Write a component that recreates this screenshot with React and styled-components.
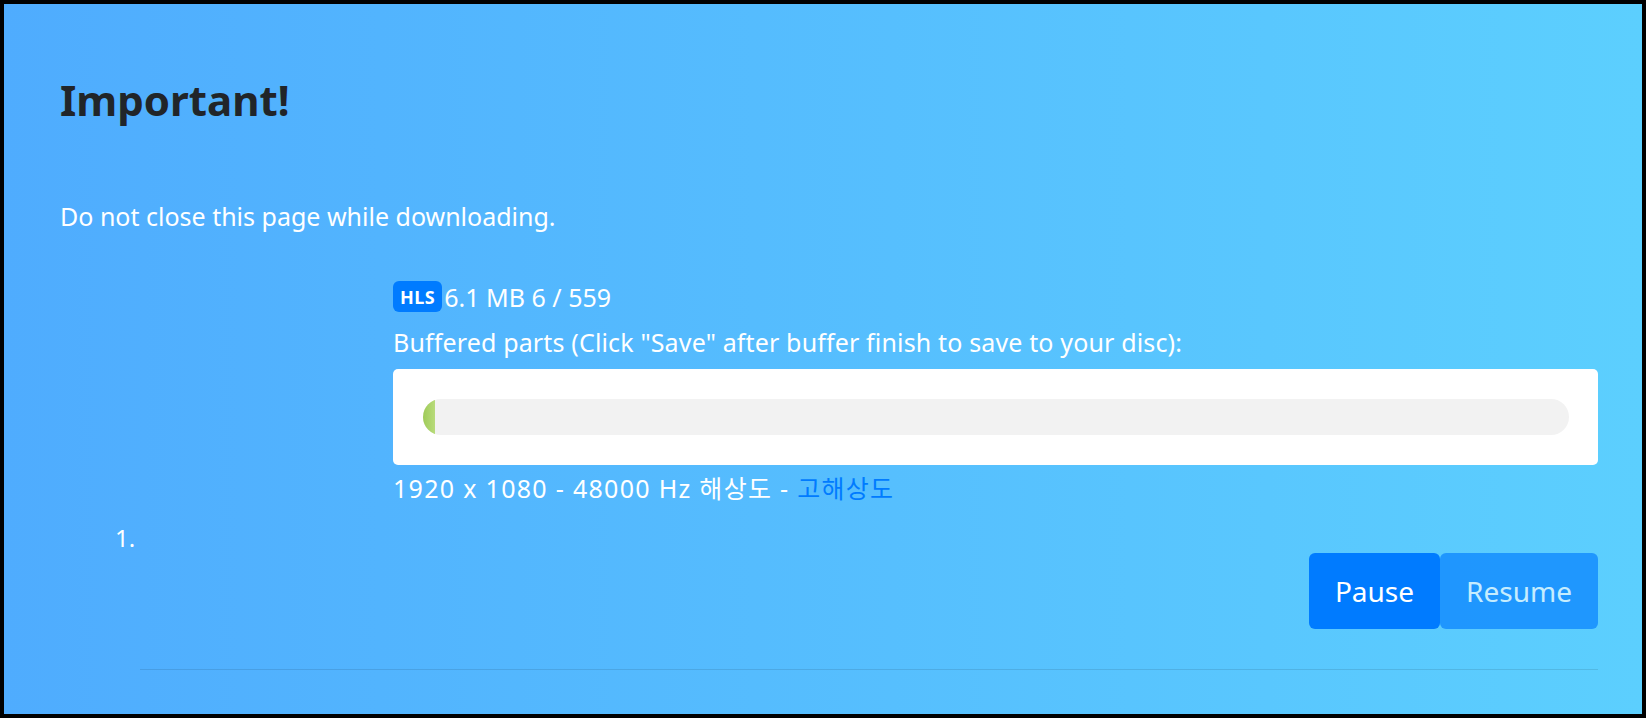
import React from "react";
import styled, { createGlobalStyle } from "styled-components";

const GlobalStyle = createGlobalStyle`
  html, body {
    margin: 0;
    padding: 0;
  }

  body {
    font-family: "Noto Sans", "Noto Sans CJK KR", sans-serif;
    color: #fff;
  }

  * {
    box-sizing: border-box;
  }
`;

const download = {
  index: 1,
  type: "HLS",
  size: "6.1 MB",
  done: 6,
  total: 559,
  resolution: "1920 x 1080 - 48000 Hz 해상도 - ",
  quality: "고해상도",
};

const App = () => {
  const percent = (download.done / download.total) * 100;

  return (
    <>
      <GlobalStyle />
      <Frame>
        <Title>Important!</Title>
        <Notice>Do not close this page while downloading.</Notice>

        <List>
          <Item>
            <Marker>{download.index}.</Marker>
            <Entry>
              <Body>
                <Meta>
                  <Badge>{download.type}</Badge>
                  <span>
                    {download.size} {download.done} / {download.total}
                  </span>
                </Meta>
                <Label>
                  Buffered parts (Click "Save" after buffer finish to save to
                  your disc):
                </Label>
                <Panel>
                  <Track>
                    <Fill style={{ width: `${percent}%` }} />
                  </Track>
                </Panel>
                <Resolution>
                  {download.resolution}
                  <Link href="#">{download.quality}</Link>
                </Resolution>
              </Body>
              <Actions>
                <Button>Pause</Button>
                <Button disabled>Resume</Button>
              </Actions>
            </Entry>
          </Item>
        </List>
      </Frame>
    </>
  );
};

export default App;

const Frame = styled.div`
  width: 100%;
  height: 100vh;
  padding: 71px 44px 0 56px;
  border: 4px solid #000;
  background: linear-gradient(to right, #4facfe 0%, #5ccffe 100%);
  overflow: hidden;
`;

const Title = styled.h1`
  margin: 0 0 76px;
  font-size: 42px;
  line-height: 50px;
  font-weight: 700;
  color: #212529;
`;

const Notice = styled.p`
  margin: 0;
  font-size: 25px;
  line-height: 30px;
`;

const List = styled.ol`
  margin: 52px 0 0 51px;
  padding: 0;
  list-style: none;
`;

const Item = styled.li`
  display: flex;
  align-items: flex-start;
`;

const Marker = styled.span`
  width: 29px;
  flex-shrink: 0;
  margin-top: 240px;
  padding-left: 4px;
  font-size: 24px;
  line-height: 30px;
`;

const Entry = styled.div`
  flex: 1;
  display: grid;
  grid-template-columns: 253px 1fr;
  padding-bottom: 40px;
  border-bottom: 1px solid rgba(0, 0, 0, 0.1);
`;

const Body = styled.div`
  grid-column: 2;
  font-size: 25px;
  line-height: 30px;
`;

const Meta = styled.div`
  display: flex;
  align-items: center;
  gap: 2px;
  height: 31px;
  margin-top: -2px;
`;

const Badge = styled.span`
  display: inline-flex;
  align-items: center;
  height: 31px;
  padding: 0 7px;
  border-radius: 6px;
  background-color: #007bff;
  font-size: 18px;
  font-weight: 700;
  letter-spacing: 0.5px;
`;

const Label = styled.div`
  margin-top: 15px;
  letter-spacing: 0.15px;
`;

const Panel = styled.div`
  margin-top: 12px;
  padding: 30px 29px 30px 30px;
  border-radius: 5px;
  background-color: #fff;
`;

const Track = styled.div`
  height: 36px;
  border-radius: 18px;
  background-color: #f2f2f2;
  overflow: hidden;
`;

const Fill = styled.div`
  height: 100%;
  border-radius: 18px 0 0 18px;
  background: linear-gradient(to right, #9fcb58, #b8db7b);
`;

const Resolution = styled.div`
  margin-top: 8px;
  letter-spacing: 1.3px;
`;

const Link = styled.a`
  color: #007bff;
  text-decoration: none;
`;

const Actions = styled.div`
  grid-column: 2;
  display: flex;
  justify-content: flex-end;
  margin-top: 50px;
`;

const Button = styled.button`
  height: 76px;
  padding: 0 26px;
  border: none;
  border-radius: 6px;
  background-color: #007bff;
  font-family: "Noto Sans", sans-serif;
  font-size: 28px;
  color: #fff;
  cursor: pointer;

  &:disabled {
    opacity: 0.65;
    cursor: default;
  }
`;
